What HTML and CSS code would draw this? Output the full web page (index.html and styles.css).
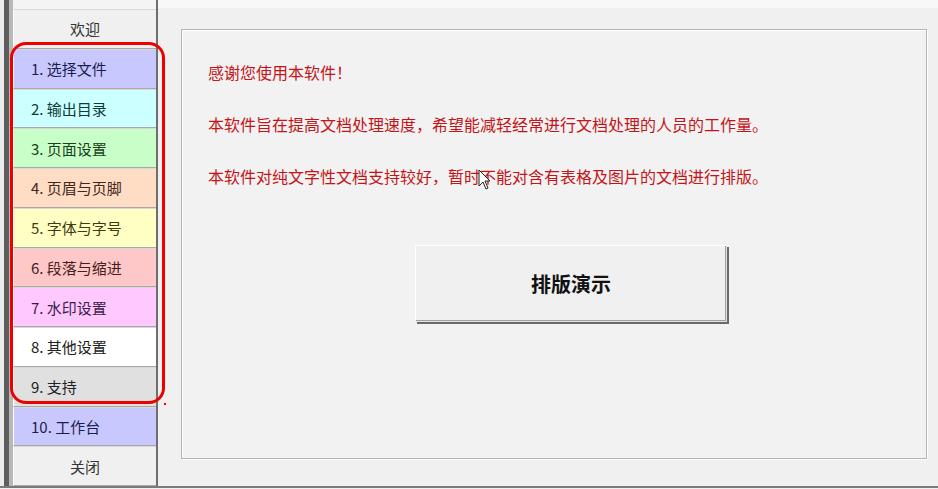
FILE: index.html
```html
<!DOCTYPE html>
<html lang="zh-CN">
<head>
    <meta charset="UTF-8">
    <meta name="viewport" content="width=device-width, initial-scale=1.0">
    <title>排版工具</title>
    <link rel="stylesheet" href="styles.css">
</head>
<body>
    <div class="window">
        <div class="edge"></div>
        <nav class="tabs">
            <div class="tab center">欢迎</div>
            <div class="tab t1">1. 选择文件</div>
            <div class="tab t2">2. 输出目录</div>
            <div class="tab t3">3. 页面设置</div>
            <div class="tab t4">4. 页眉与页脚</div>
            <div class="tab t5">5. 字体与字号</div>
            <div class="tab t6">6. 段落与缩进</div>
            <div class="tab t7">7. 水印设置</div>
            <div class="tab t8">8. 其他设置</div>
            <div class="tab t9">9. 支持</div>
            <div class="tab t10">10. 工作台</div>
            <div class="tab center">关闭</div>
        </nav>
        <main class="content">
            <div class="group">
                <p class="msg">感谢您使用本软件！</p>
                <p class="msg">本软件旨在提高文档处理速度，希望能减轻经常进行文档处理的人员的工作量。</p>
                <p class="msg">本软件对纯文字性文档支持较好，暂时不能对含有表格及图片的文档进行排版。</p>
                <button class="demo" type="button">排版演示</button>
            </div>
        </main>

        <!-- red marker drawn over the tab list -->
        <div class="ring"></div>
        <div class="dot"></div>

        <svg class="cursor" width="13" height="21" viewBox="0 0 13 21">
            <path d="M1 1 L1 17 L5 13 L8 20 L10 19 L7 12 L12 12 Z" fill="#fff" stroke="#222" stroke-width="1"/>
        </svg>
    </div>
</body>
</html>
```

FILE: styles.css
```css
body {
    margin: 0;
    background-color: #f0f0f0;
    font-family: "Noto Sans CJK SC", "Noto Sans", sans-serif;
}
.window {
    position: relative;
    display: flex;
    width: 938px;
    height: 486px;
    border-bottom: 2px solid #7a7a7a;
    background-color: #f0f0f0;
    overflow: hidden;
}
.edge {
    width: 4px;
    flex: none;
    background: #ececec;
    border-right: 5px solid #5e5e5e;
}
.tabs {
    flex: none;
    width: 143px;
    padding-top: 9px;
    background: #f4f4f4;
    border-left: 4px solid #b8b8b8;
    border-right: 2px solid #6e6e6e;
    display: grid;
    grid-template-rows: repeat(12, 1fr);
}
.tab {
    display: flex;
    align-items: center;
    padding-left: 17px;
    font-size: 15px;
    color: #222;
    border-top: 1px solid #d8d8d8;
    border-bottom: 1px solid #a8a8a8;
    border-left: 1px solid #ffffff;
}
.tab.center {
    justify-content: center;
    padding-left: 0;
    background: #f0f0f0;
    color: #333;
}
.t1 { background: #c8c8ff; color: #1c1c50; }
.t2 { background: #ccffff; color: #0e3a3a; }
.t3 { background: #c8ffc8; color: #1a401a; }
.t4 { background: #ffdcc4; color: #40281a; }
.t5 { background: #ffffc4; color: #3c3c14; }
.t6 { background: #ffc8c8; color: #4a1c1c; }
.t7 { background: #ffc8ff; color: #3e1c4a; }
.t8 { background: #ffffff; color: #222; }
.t9 { background: #e0e0e0; color: #222; }
.t10 { background: #c8c8ff; color: #1c1c50; }
.content {
    flex: 1;
    box-sizing: border-box;
    height: 486px;
    padding: 21px 11px 27px 23px;
    border-top: 8px solid #f8f8f8;
}
.group {
    height: 100%;
    box-sizing: border-box;
    border: 1px solid #b4b4b4;
    box-shadow: inset 1px 1px 0 #ffffff, 1px 1px 0 #ffffff;
    background: #f2f2f2;
    padding: 30px 0 0 26px;
}
.msg {
    margin: 0 0 28px;
    font-size: 16px;
    line-height: 24px;
    color: #c41418;
}
.demo {
    display: block;
    margin: 57px 0 0 207px;
    width: 312px;
    height: 77px;
    font-family: "Noto Sans CJK SC", sans-serif;
    font-size: 20px;
    font-weight: bold;
    color: #111;
    background: #f0f0f0;
    border: 1px solid #e2e2e2;
    border-top-color: #ffffff;
    border-left-color: #ffffff;
    box-shadow: 2px 2px 0 #6a6a6a, inset -1px -1px 0 #a0a0a0;
}
.ring {
    position: absolute;
    left: 10px;
    top: 42px;
    width: 149px;
    height: 356px;
    border: 3px solid #ee0000;
    border-radius: 16px;
}
.dot {
    position: absolute;
    left: 164px;
    top: 403px;
    width: 2px;
    height: 2px;
    background: #e00;
}
.cursor {
    position: absolute;
    left: 478px;
    top: 169px;
}
```
